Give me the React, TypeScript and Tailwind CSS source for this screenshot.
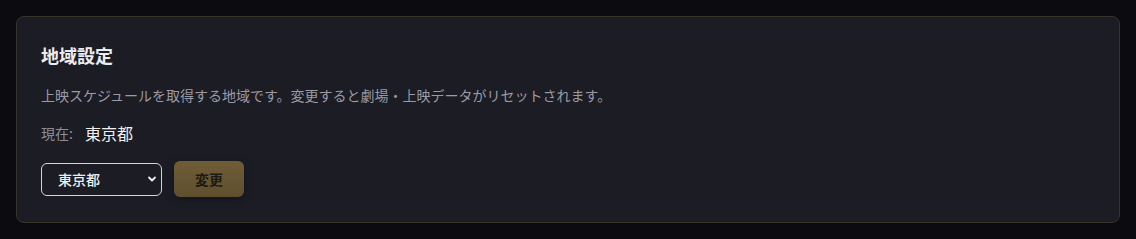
export default function App(): React.ReactElement {
  return (
    <div
      className="min-h-[239px] bg-[#0c0b10] p-4"
      style={{ fontFamily: '"Noto Sans CJK JP", "Noto Sans", sans-serif' }}
    >
      <div className="rounded-lg border border-[#38332a] bg-[#1c1c25] px-6 pt-6 pb-[25px]">
        <h2 className="mb-4 text-lg leading-7 font-bold text-[#ececec]">地域設定</h2>
        <p className="mb-4 text-sm leading-5 text-[#9b9aa2]">
          上映スケジュールを取得する地域です。変更すると劇場・上映データがリセットされます。
        </p>
        <div className="mb-4 flex h-6 items-center gap-3">
          <span className="text-sm text-[#8e8d95]">現在:</span>
          <span className="text-base text-[#f0f0f0]">東京都</span>
        </div>
        <div className="flex h-9 items-center gap-3">
          <div className="relative">
            <select
              defaultValue="東京都"
              className="h-[33px] w-[121px] appearance-none rounded-md border border-[#d4d4d8] bg-[#1c1c25] pl-4 text-sm font-medium text-[#eeeeee] outline-none"
            >
              <option>東京都</option>
              <option>大阪府</option>
              <option>神奈川県</option>
            </select>
            <svg
              className="pointer-events-none absolute top-1/2 right-[5px] -translate-y-1/2"
              width="10"
              height="10"
              viewBox="0 0 10 10"
              fill="none"
            >
              <path d="M2 3.5 5 6.5 8 3.5" stroke="#f0f0f0" strokeWidth="1.8" strokeLinecap="round" strokeLinejoin="round" />
            </svg>
          </div>
          <button
            disabled
            className="h-9 w-[70px] rounded-md bg-gradient-to-b from-[#6f5d36] to-[#5e4f2e] text-sm font-bold text-[#1d1a15] shadow-[0_2px_8px_rgba(0,0,0,0.35)]"
          >
            変更
          </button>
        </div>
      </div>
    </div>
  )
}
